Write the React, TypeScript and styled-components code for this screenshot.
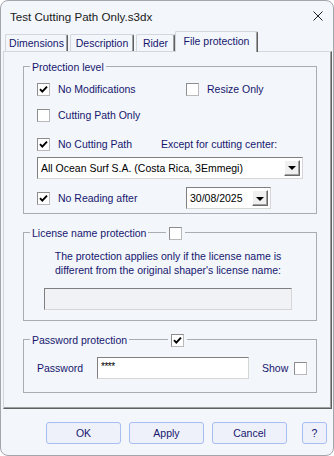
import styled, {createGlobalStyle} from "styled-components";

const GlobalStyle = createGlobalStyle`
  html, body {
    margin: 0;
    padding: 0;
    background: #ffffff;
  }
  body {
    font-family: "Liberation Sans", Arial, sans-serif;
  }
`

const NAVY = '#16166e'
const BG = '#f3f6fb'

const Window = styled.div`
  width: 334px;
  height: 456px;
  box-sizing: border-box;
  border: 1px solid #a3a6ab;
  border-radius: 8px;
  background: ${BG};
  overflow: hidden;
  display: flex;
  flex-direction: column;
`
const TitleBar = styled.div`
  height: 30px;
  flex: none;
  display: flex;
  align-items: center;
  justify-content: space-between;
  padding: 0 9px 0 9px;
  font-size: 11.6px;
  color: #1a1a1a;
`
const CloseIcon = styled.svg`
  width: 10px;
  height: 10px;
  margin-right: 1px;
`
const TabStrip = styled.div`
  height: 20px;
  flex: none;
  display: flex;
  align-items: flex-end;
  gap: 2px;
  padding-left: 4px;
  position: relative;
  z-index: 1;
`
const Tab = styled.div<{ $w: number; $active?: boolean }>`
  width: ${p => p.$w}px;
  height: ${p => (p.$active ? 21 : 17)}px;
  box-sizing: border-box;
  margin-left: ${p => (p.$active ? -2 : 0)}px;
  margin-bottom: ${p => (p.$active ? -1 : 0)}px;
  display: flex;
  align-items: center;
  justify-content: center;
  padding-bottom: ${p => (p.$active ? 3 : 0)}px;
  font-size: 10.5px;
  color: ${NAVY};
  background: ${BG};
  border-top: 1px solid #d3d6dc;
  border-left: 1px solid #d3d6dc;
  border-right: 1px solid #5f5f5f;
  box-shadow: inset -1px 0 #a0a0a0;
  border-radius: 2px 2px 0 0;
`
const Panel = styled.div`
  margin-left: 2px;
  width: 329px;
  box-sizing: border-box;
  border-top: 1px solid #d3d6dc;
  border-left: 1px solid #d3d6dc;
  border-right: 1px solid #5f5f5f;
  border-bottom: 1px solid #5f5f5f;
  box-shadow: inset -1px -1px #a0a0a0;
  padding: 14px 14px 15px 19px;
  display: flex;
  flex-direction: column;
`
const Group = styled.div<{ $top?: number; $bottom: number }>`
  margin-top: ${p => p.$top || 0}px;
  border: 1px solid #a9acb2;
  padding: 0 0 ${p => p.$bottom}px 0;
  display: flex;
  flex-direction: column;
`
const GroupHead = styled.div`
  height: 14px;
  margin-top: -7px;
  display: flex;
  align-items: center;
  padding-left: 6px;
`
const HeadText = styled.span`
  background: ${BG};
  padding: 0 2px;
  font-size: 10.5px;
  line-height: 14px;
  color: ${NAVY};
`
const HeadBox = styled.span<{ $left: number }>`
  margin-left: ${p => p.$left}px;
  background: ${BG};
  padding: 0 3px;
  display: flex;
  align-items: center;
`
const Row = styled.div<{ $top: number; $h: number; $left?: number }>`
  margin-top: ${p => p.$top}px;
  height: ${p => p.$h}px;
  display: flex;
  align-items: center;
  padding-left: ${p => p.$left ?? 13}px;
`
const Cell = styled.div<{ $w?: number }>`
  display: flex;
  align-items: center;
  ${p => (p.$w ? `width: ${p.$w}px; flex: none;` : '')}
`
const Box = styled.span`
  width: 13px;
  height: 13px;
  box-sizing: border-box;
  flex: none;
  border: 1px solid #8d8d8d;
  border-right-color: #b9b9b9;
  border-bottom-color: #b9b9b9;
  background: #fff;
  display: flex;
  align-items: center;
  justify-content: center;
`
const Label = styled.span<{ $gap?: number }>`
  margin-left: ${p => p.$gap ?? 0}px;
  font-size: 10.5px;
  color: ${NAVY};
  white-space: nowrap;
`
const Field = styled.div<{ $w: number; $disabled?: boolean; $ml?: number }>`
  width: ${p => p.$w}px;
  margin-left: ${p => p.$ml ?? 0}px;
  height: 22px;
  box-sizing: border-box;
  flex: none;
  border: 1px solid #7f7f7f;
  border-right-color: #d6d6d6;
  border-bottom-color: #d6d6d6;
  background: ${p => (p.$disabled ? '#f0f2f6' : '#fff')};
  display: flex;
  align-items: center;
  justify-content: space-between;
  padding: 0 2px 0 3px;
  font-size: 10.5px;
  color: #000;
`
const Stars = styled.span`
  align-self: flex-start;
  margin-top: 3px;
  font-size: 10px;
  letter-spacing: -0.5px;
`
const DropButton = styled.span`
  width: 16px;
  height: 16px;
  box-sizing: border-box;
  background: #f0f0f0;
  border-top: 1px solid #ffffff;
  border-left: 1px solid #ffffff;
  border-right: 1px solid #696969;
  border-bottom: 1px solid #696969;
  box-shadow: inset -1px -1px #a0a0a0;
  display: flex;
  align-items: center;
  justify-content: center;
  &::after {
    content: "";
    border-left: 4px solid transparent;
    border-right: 4px solid transparent;
    border-top: 4px solid #000;
    margin-top: 1px;
  }
`
const Note = styled.div`
  margin-top: 9px;
  text-align: center;
  font-size: 10.5px;
  line-height: 14px;
  color: ${NAVY};
  padding-right: 4px;
`
const Footer = styled.div`
  flex: 1;
  display: flex;
  align-items: flex-start;
  justify-content: flex-end;
  padding: 13px 6px 0 0;
  gap: 8px;
`
const Button = styled.div<{ $w: number; $ml?: number }>`
  width: ${p => p.$w}px;
  height: 22px;
  box-sizing: border-box;
  margin-left: ${p => p.$ml ?? 0}px;
  border: 1px solid #a8bdf2;
  border-radius: 3px;
  background: #eef1fa;
  display: flex;
  align-items: center;
  justify-content: center;
  font-size: 10.5px;
  color: ${NAVY};
`

const Check = ({checked}: { checked?: boolean }) => (
  <Box>
    {checked && (
      <svg width="9" height="9" viewBox="0 0 9 9">
        <path d="M1 4.2 L3.3 6.6 L8 1.6" fill="none" stroke="#000" strokeWidth="1.9"/>
      </svg>
    )}
  </Box>
)

const CheckLabel = ({checked, children}: { checked?: boolean; children: string }) => (
  <Cell>
    <Check checked={checked}/>
    <Label $gap={8}>{children}</Label>
  </Cell>
)

const App = () => {
  return (
    <>
      <GlobalStyle/>
      <Window>
        <TitleBar>
          <span>Test Cutting Path Only.s3dx</span>
          <CloseIcon viewBox="0 0 10 10">
            <path d="M0.5 0.5 L9.5 9.5 M9.5 0.5 L0.5 9.5" stroke="#222" strokeWidth="1"/>
          </CloseIcon>
        </TitleBar>
        <TabStrip>
          <Tab $w={63}>Dimensions</Tab>
          <Tab $w={64}>Description</Tab>
          <Tab $w={39}>Rider</Tab>
          <Tab $w={83} $active>File protection</Tab>
        </TabStrip>
        <Panel>
          <Group $bottom={4}>
            <GroupHead>
              <HeadText>Protection level</HeadText>
            </GroupHead>
            <Row $top={5} $h={20}>
              <Cell $w={149}><CheckLabel checked>No Modifications</CheckLabel></Cell>
              <CheckLabel>Resize Only</CheckLabel>
            </Row>
            <Row $top={6} $h={20}>
              <CheckLabel>Cutting Path Only</CheckLabel>
            </Row>
            <Row $top={9} $h={20}>
              <Cell $w={124}><CheckLabel checked>No Cutting Path</CheckLabel></Cell>
              <Label>Except for cutting center:</Label>
            </Row>
            <Row $top={3} $h={21}>
              <Field $w={266}>
                <span>All Ocean Surf S.A. (Costa Rica, 3Emmegi)</span>
                <DropButton/>
              </Field>
            </Row>
            <Row $top={9} $h={22}>
              <Cell $w={149}><CheckLabel checked>No Reading after</CheckLabel></Cell>
              <Field $w={85}>
                <span>30/08/2025</span>
                <DropButton/>
              </Field>
            </Row>
          </Group>

          <Group $top={18} $bottom={10}>
            <GroupHead>
              <HeadText>License name protection</HeadText>
              <HeadBox $left={18}><Check/></HeadBox>
            </GroupHead>
            <Note>
              The protection applies only if the license name is<br/>
              different from the original shaper's license name:
            </Note>
            <Row $top={11} $h={22} $left={20}>
              <Field $w={248} $disabled/>
            </Row>
          </Group>

          <Group $top={18} $bottom={13}>
            <GroupHead>
              <HeadText>Password protection</HeadText>
              <HeadBox $left={39}><Check checked/></HeadBox>
            </GroupHead>
            <Row $top={10} $h={22}>
              <Cell $w={60}><Label>Password</Label></Cell>
              <Field $w={152}>
                <Stars>****</Stars>
              </Field>
              <Label $gap={13}>Show</Label>
              <Cell style={{marginLeft: 6}}><Check/></Cell>
            </Row>
          </Group>
        </Panel>
        <Footer>
          <Button $w={75}>OK</Button>
          <Button $w={75}>Apply</Button>
          <Button $w={75}>Cancel</Button>
          <Button $w={25} $ml={7}>?</Button>
        </Footer>
      </Window>
    </>
  )
}

export default App
